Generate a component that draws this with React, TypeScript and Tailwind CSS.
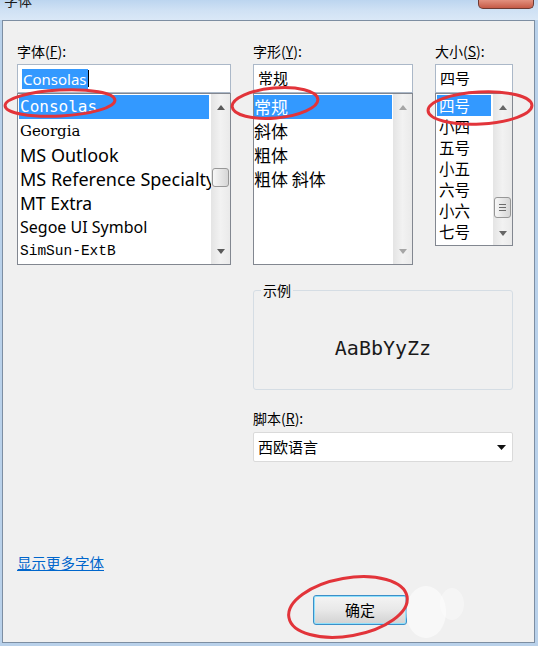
import React from "react";

const fonts = [
  { name: "Consolas", cls: "font-['DejaVu_Sans_Mono',monospace] text-[16px]", selected: true },
  { name: "Georgia", cls: "font-['DejaVu_Serif',serif] text-[15px]" },
  { name: "MS Outlook", cls: "font-['Noto_Sans',sans-serif] text-[18px]" },
  { name: "MS Reference Specialty", cls: "font-['Noto_Sans',sans-serif] text-[18px]" },
  { name: "MT Extra", cls: "font-['Noto_Sans',sans-serif] text-[17.5px]" },
  { name: "Segoe UI Symbol", cls: "font-['Noto_Sans',sans-serif] text-[16px]" },
  { name: "SimSun-ExtB", cls: "font-['Liberation_Mono',monospace] text-[14.5px]" },
];

const styles = ["常规", "斜体", "粗体", "粗体 斜体"];
const sizes = ["四号", "小四", "五号", "小五", "六号", "小六", "七号"];

const Arrow = ({ up, color }: { up?: boolean; color: string }) => (
  <svg width="8" height="5" viewBox="0 0 8 5">
    <path d={up ? "M0 5 L4 0 L8 5Z" : "M0 0 L4 5 L8 0Z"} fill={color} />
  </svg>
);

const ScrollBar = ({
  gap,
  thumbH,
  grip,
  bottomH,
  color,
}: {
  gap?: number;
  thumbH?: number;
  grip?: boolean;
  bottomH: string;
  color: string;
}) => (
  <div className="w-[19px] flex flex-col bg-gradient-to-r from-[#e4e4e4] via-[#f2f2f2] to-[#eaeaea]">
    <div className="h-[26px] flex items-center justify-center">
      <Arrow up color={color} />
    </div>
    {thumbH ? (
      <>
        <div style={{ height: gap }} />
        <div
          className="mx-[1px] rounded-[3px] border border-[#979797] bg-gradient-to-r from-[#f7f7f7] to-[#d6d6d6] flex flex-col items-center justify-center gap-[2px]"
          style={{ height: thumbH }}
        >
          {grip && (
            <>
              <div className="w-[7px] h-[1px] bg-[#6b6b6b]" />
              <div className="w-[7px] h-[1px] bg-[#6b6b6b]" />
              <div className="w-[7px] h-[1px] bg-[#6b6b6b]" />
            </>
          )}
        </div>
      </>
    ) : null}
    <div className="flex-1" />
    <div className={`${bottomH} flex items-center justify-center`}>
      <Arrow color={color} />
    </div>
  </div>
);

const Label = ({ text, key1 }: { text: string; key1: string }) => (
  <div className="h-[20px] leading-[20px] text-[14px]">
    {text}(<span className="underline">{key1}</span>):
  </div>
);

export default function App() {
  return (
    <div className="relative w-[538px] h-[646px] overflow-hidden bg-[#b9d1ea] font-['Noto_Sans_CJK_SC',sans-serif] text-black">
      {/* title bar */}
      <div className="h-[20px] flex items-start justify-between overflow-hidden bg-gradient-to-b from-[#bcd5ef] via-[#cfe1f4] to-[#dae8f7]">
        <span className="-mt-[10px] ml-[4px] text-[14px] leading-[20px] text-[#1a1a1a]">字体</span>
        <div className="w-[56px] h-[9px] mr-[4px] rounded-b-[5px] border border-t-0 border-[#6e3a33] bg-gradient-to-b from-[#e2907f] to-[#c55a47]" />
      </div>

      <div className="ml-[2px] w-[533px] h-[623px] border border-[#7d8ea2] bg-[#f0f0f0] pl-[14px] pt-[20px]">
        <div className="flex items-start gap-[22px]">
          {/* font column */}
          <div className="w-[214px] flex flex-col">
            <Label text="字体" key1="F" />
            <div className="mt-[3px] h-[29px] border border-[#abb8c8] bg-white flex items-center pl-[4px]">
              <span className="bg-[#3399ff] text-white text-[15px] leading-[20px] px-[1px] font-['Noto_Sans',sans-serif]">
                Consolas
              </span>
              <span className="w-[1px] h-[17px] bg-black" />
            </div>
            <div className="flex h-[172px] border border-[#828790] bg-white">
              <div className="flex-1 min-w-0 overflow-hidden pt-[1px] pl-[1px] pr-[2px]">
                {fonts.map((f) => (
                  <div
                    key={f.name}
                    className={`h-[24px] leading-[24px] pl-[1px] whitespace-nowrap ${f.cls} ${
                      f.selected ? "bg-[#3399ff] text-white" : ""
                    }`}
                  >
                    {f.name}
                  </div>
                ))}
              </div>
              <ScrollBar gap={48} thumbH={19} bottomH="h-[26px]" color="#5a5a5a" />
            </div>
          </div>

          {/* right area */}
          <div className="w-[260px] flex flex-col">
            <div className="flex items-start gap-[22px]">
              <div className="w-[160px] flex flex-col">
                <Label text="字形" key1="Y" />
                <div className="mt-[3px] h-[29px] border border-[#abb8c8] bg-white flex items-center pl-[4px] text-[15px]">
                  常规
                </div>
                <div className="flex h-[172px] border border-[#828790] bg-white">
                  <div className="flex-1 min-w-0 overflow-hidden pt-[1px] pr-[1px]">
                    {styles.map((s, i) => (
                      <div
                        key={s}
                        className={`h-[24px] leading-[24px] text-[17px] whitespace-nowrap ${
                          i === 0 ? "bg-[#3399ff] text-white" : ""
                        }`}
                      >
                        {s}
                      </div>
                    ))}
                  </div>
                  <ScrollBar bottomH="h-[26px]" color="#a6a6a6" />
                </div>
              </div>

              <div className="w-[78px] flex flex-col">
                <Label text="大小" key1="S" />
                <div className="mt-[3px] h-[29px] border border-[#abb8c8] bg-white flex items-center pl-[4px] text-[15px]">
                  四号
                </div>
                <div className="flex h-[153px] border border-[#828790] bg-white">
                  <div className="flex-1 min-w-0 overflow-hidden pt-[1px] pl-[1px] pr-[2px]">
                    {sizes.map((s, i) => (
                      <div
                        key={s}
                        className={`h-[21px] leading-[21px] text-[15.5px] pl-[2px] whitespace-nowrap ${
                          i === 0 ? "bg-[#3399ff] text-white" : ""
                        }`}
                      >
                        {s}
                      </div>
                    ))}
                  </div>
                  <ScrollBar gap={77} thumbH={21} grip bottomH="h-[24px]" color="#666666" />
                </div>
              </div>
            </div>

            {/* sample */}
            <div className="relative mt-[25px] h-[100px] rounded-[3px] border border-[#d5dde4] flex items-center justify-center pt-[16px]">
              <span className="absolute -top-[11px] left-[7px] px-[2px] bg-[#f0f0f0] text-[14px] leading-[20px]">示例</span>
              <span className="font-['DejaVu_Sans_Mono',monospace] text-[20px] text-[#1a1a1a]">AaBbYyZz</span>
            </div>

            <div className="mt-[18px]">
              <Label text="脚本" key1="R" />
            </div>
            <div className="mt-[4px] h-[30px] rounded-[2px] border border-[#dadada] bg-white flex items-center justify-between pl-[4px] pr-[6px] text-[15px]">
              <span>西欧语言</span>
              <svg width="9" height="5" viewBox="0 0 9 5">
                <path d="M0 0 L4.5 5 L9 0Z" fill="#111" />
              </svg>
            </div>
          </div>
        </div>

        <div className="mt-[90px] h-[20px] leading-[20px]">
          <span className="text-[14.5px] text-[#0066cc] underline">显示更多字体</span>
        </div>

        <div className="mt-[23px] ml-[296px] w-[94px] h-[30px] rounded-[3px] border border-[#3c8fc8] shadow-[inset_0_0_0_1px_#8fe0fb] bg-gradient-to-b from-[#f4f4f4] via-[#e8e8e8] to-[#d2d2d2] flex items-center justify-center text-[15px]">
          确定
        </div>
      </div>

      {/* annotations drawn over the screenshot */}
      <svg className="absolute inset-0 pointer-events-none" width="538" height="646" viewBox="0 0 538 646">
        <ellipse cx="426" cy="612" rx="20" ry="26" fill="#ffffff" opacity="0.55" />
        <ellipse cx="452" cy="604" rx="12" ry="16" fill="#ffffff" opacity="0.35" />
        <g fill="none" stroke="#e2343a" strokeWidth="3">
          <ellipse cx="60" cy="103" rx="55" ry="13" transform="rotate(-3 60 103)" />
          <ellipse cx="275" cy="103" rx="43" ry="15" transform="rotate(-5 275 103)" />
          <ellipse cx="480" cy="108" rx="52" ry="16" transform="rotate(-3 480 108)" />
          <ellipse cx="348" cy="607" rx="60" ry="29" transform="rotate(-10 348 607)" />
        </g>
      </svg>
    </div>
  );
}
